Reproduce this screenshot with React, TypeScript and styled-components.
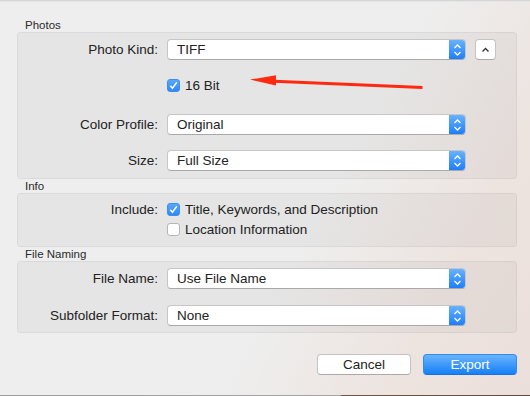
import React from 'react';
import styled, { createGlobalStyle } from 'styled-components';

const GlobalStyle = createGlobalStyle`
  html, body {
    margin: 0;
    padding: 0;
    background: #ececec;
  }
  body {
    font-family: "Liberation Sans", Arial, sans-serif;
    color: #222;
    -webkit-font-smoothing: antialiased;
  }
`;

const Window = styled.div`
  position: relative;
  width: 530px;
  height: 396px;
  box-sizing: border-box;
  overflow: hidden;
  display: flex;
  flex-direction: column;
  background: linear-gradient(118deg, #eeeeee 0%, #eeeeee 58%, #ede4e0 80%, #ebdfdb 100%);
  border-top: 1px solid #d6d6d6;
  box-shadow: inset 0 1px 0 #e4e4e4;
`;

const Content = styled.div`
  flex: 1;
  display: flex;
  flex-direction: column;
  padding: 17px 13px 0 17px;
`;

const SectionTitle = styled.div`
  height: 14px;
  line-height: 14px;
  font-size: 11.5px;
  padding-left: 8px;
  color: #2a2a2a;
`;

const Group = styled.div<{ $pt: number; $pb: number }>`
  box-sizing: border-box;
  background: rgba(0, 0, 0, 0.035);
  border: 1px solid rgba(0, 0, 0, 0.05);
  border-radius: 4px;
  padding: ${p => p.$pt}px 0 ${p => p.$pb}px 0;
  display: flex;
  flex-direction: column;
`;

const Row = styled.div<{ $mt?: number; $h?: number }>`
  display: grid;
  grid-template-columns: 140px 299px 32px;
  column-gap: 9px;
  align-items: center;
  height: ${p => p.$h ?? 21}px;
  margin-top: ${p => p.$mt ?? 0}px;
`;

const Label = styled.div`
  text-align: right;
  font-size: 13.5px;
  color: #222;
`;

const Select = styled.div`
  position: relative;
  box-sizing: border-box;
  height: 21px;
  background: #fff;
  border-radius: 4px;
  border: 1px solid #c6c6c6;
  border-bottom-color: #a9a9a9;
  display: flex;
  align-items: center;
  padding-left: 9px;
  font-size: 13.5px;
  color: #222;
  overflow: hidden;
`;

const Stepper = styled.div`
  position: absolute;
  top: -1px;
  right: -1px;
  bottom: -1px;
  width: 17px;
  border-radius: 0 4px 4px 0;
  background: linear-gradient(#6cb5fd, #1a7bfb);
  display: flex;
  align-items: center;
  justify-content: center;
`;

const SmallButton = styled.div`
  box-sizing: border-box;
  width: 21px;
  height: 21px;
  background: #fff;
  border: 1px solid #c4c4c4;
  border-bottom-color: #aaa;
  border-radius: 4px;
  display: flex;
  align-items: center;
  justify-content: center;
`;

const CheckLine = styled.label`
  display: flex;
  align-items: center;
  gap: 5px;
  font-size: 13.5px;
  color: #222;
  white-space: nowrap;
`;

const Box = styled.span<{ $on?: boolean }>`
  box-sizing: border-box;
  flex: none;
  width: 13px;
  height: 13px;
  border-radius: 3px;
  display: inline-flex;
  align-items: center;
  justify-content: center;
  background: ${p => (p.$on ? 'linear-gradient(#5aa8fb, #2e88f6)' : '#fff')};
  border: 1px solid ${p => (p.$on ? '#3a8ef4' : '#b5b5b5')};
`;

const Footer = styled.div`
  display: flex;
  justify-content: flex-end;
  gap: 12px;
  margin-top: 21px;
`;

const PushButton = styled.div<{ $primary?: boolean }>`
  box-sizing: border-box;
  width: 94px;
  height: 21px;
  border-radius: 4px;
  display: flex;
  align-items: center;
  justify-content: center;
  font-size: 13.5px;
  color: ${p => (p.$primary ? '#fff' : '#222')};
  background: ${p => (p.$primary ? 'linear-gradient(#6ab4fc, #1580f7)' : '#fff')};
  border: 1px solid ${p => (p.$primary ? '#2f8bf5' : '#c4c4c4')};
  border-bottom-color: ${p => (p.$primary ? '#1b6fe0' : '#aaa')};
`;

const BottomEdge = styled.div`
  height: 1px;
  background: linear-gradient(to right, #9c9c9c 0, #a4a4a4 340px, #6e5549 342px, #5f4a40 100%);
`;

const Annotation = styled.svg`
  position: absolute;
  left: 0;
  top: 0;
  pointer-events: none;
`;

const Chevrons = () => (
  <svg width="9" height="14" viewBox="0 0 9 14">
    <path d="M1.5 5 L4.5 2 L7.5 5" fill="none" stroke="#fff" strokeWidth="1.3" />
    <path d="M1.5 9 L4.5 12 L7.5 9" fill="none" stroke="#fff" strokeWidth="1.3" />
  </svg>
);

const PopUp: React.FC<{ value: string }> = ({ value }) => (
  <Select>
    {value}
    <Stepper>
      <Chevrons />
    </Stepper>
  </Select>
);

const Check: React.FC<{ on?: boolean; text: string }> = ({ on, text }) => (
  <CheckLine>
    <Box $on={on}>
      {on && (
        <svg width="11" height="11" viewBox="0 0 11 11">
          <path d="M2.3 5.8 L4.4 8.2 L8.8 2.4" fill="none" stroke="#fff" strokeWidth="1.5" />
        </svg>
      )}
    </Box>
    {text}
  </CheckLine>
);

export default function App() {
  return (
    <>
      <GlobalStyle />
      <Window>
        <Content>
          <SectionTitle>Photos</SectionTitle>
          <Group $pt={6} $pb={7}>
            <Row>
              <Label>Photo Kind:</Label>
              <PopUp value="TIFF" />
              <SmallButton>
                <svg width="9" height="6" viewBox="0 0 9 6">
                  <path d="M1.5 4.5 L4.5 1.5 L7.5 4.5" fill="none" stroke="#333" strokeWidth="1.4" />
                </svg>
              </SmallButton>
            </Row>
            <Row $mt={17} $h={17}>
              <span />
              <Check on text="16 Bit" />
            </Row>
            <Row $mt={20}>
              <Label>Color Profile:</Label>
              <PopUp value="Original" />
            </Row>
            <Row $mt={15}>
              <Label>Size:</Label>
              <PopUp value="Full Size" />
            </Row>
          </Group>
          <SectionTitle>Info</SectionTitle>
          <Group $pt={7} $pb={8}>
            <Row $h={17}>
              <Label>Include:</Label>
              <Check on text="Title, Keywords, and Description" />
            </Row>
            <Row $mt={3} $h={17}>
              <span />
              <Check text="Location Information" />
            </Row>
          </Group>
          <SectionTitle>File Naming</SectionTitle>
          <Group $pt={6} $pb={6}>
            <Row>
              <Label>File Name:</Label>
              <PopUp value="Use File Name" />
            </Row>
            <Row $mt={16}>
              <Label>Subfolder Format:</Label>
              <PopUp value="None" />
            </Row>
          </Group>
          <Footer>
            <PushButton>Cancel</PushButton>
            <PushButton $primary>Export</PushButton>
          </Footer>
        </Content>
        <BottomEdge />
        <Annotation width="530" height="396" viewBox="0 0 530 396">
          <path d="M274 80.3 L422.5 86.6" stroke="#ff2a0f" strokeWidth="3" strokeLinecap="butt" />
          <polygon points="250,78.6 276,74.2 276,84.6" fill="#ff2a0f" />
        </Annotation>
      </Window>
    </>
  );
}
